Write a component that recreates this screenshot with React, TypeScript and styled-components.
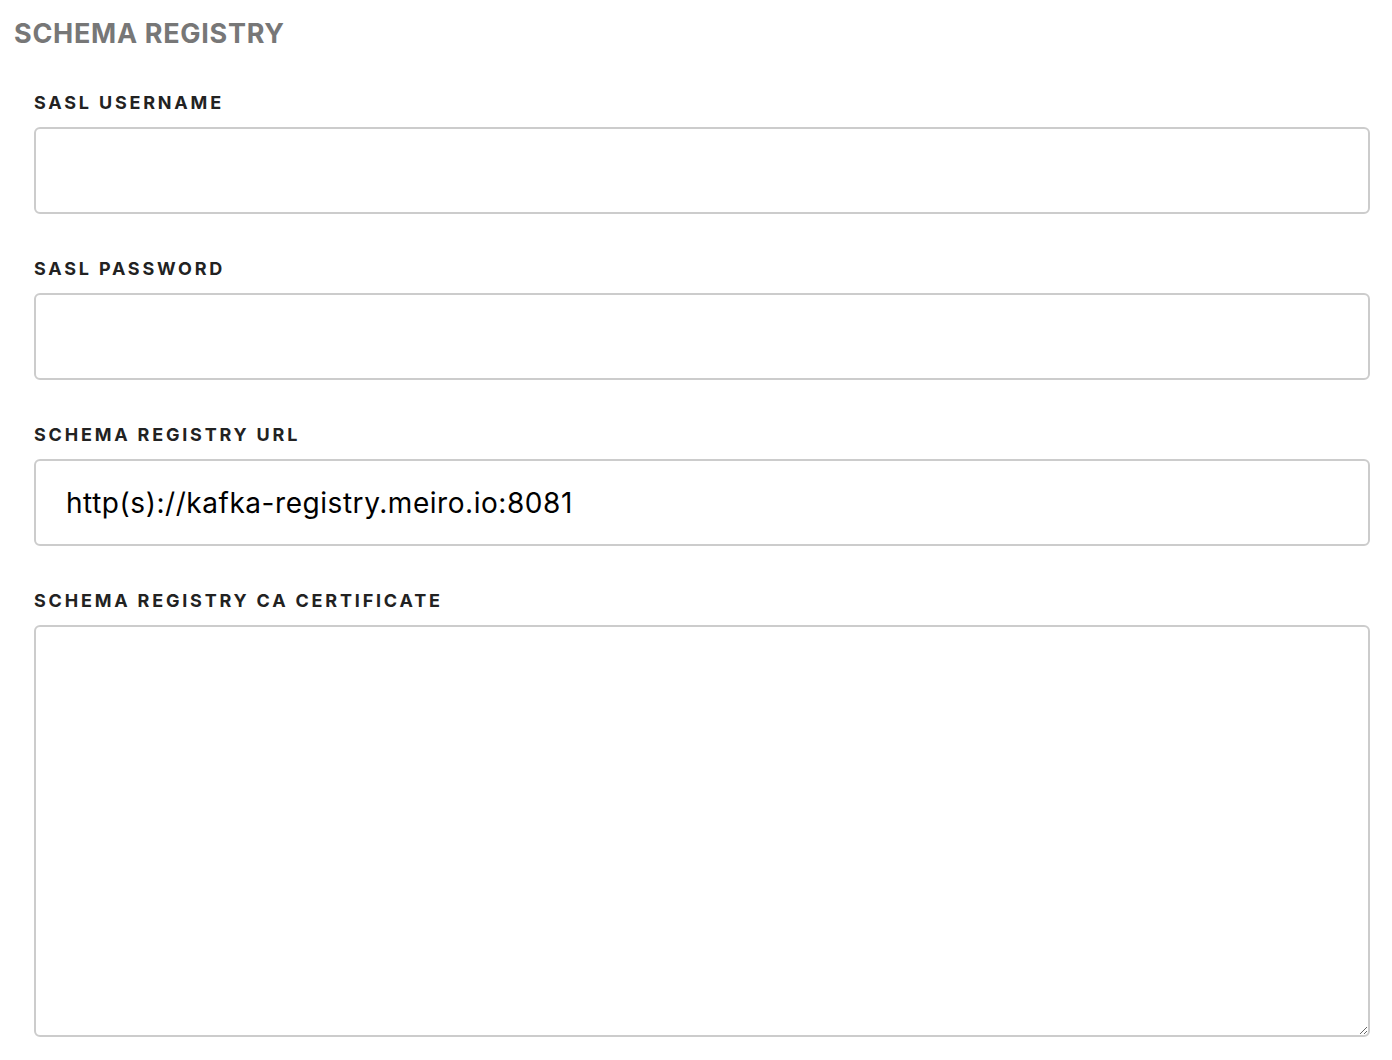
import React from "react";
import styled, { createGlobalStyle } from "styled-components";

const Global = createGlobalStyle`
  html, body { margin: 0; padding: 0; background: #fff; }
  body { font-family: Inter, "Noto Sans", "Liberation Sans", sans-serif; }
  * { box-sizing: border-box; }
`;

const Page = styled.div`
  padding: 18px 22px 0 14px;
`;

const Title = styled.h2`
  margin: 0;
  font-size: 27px;
  line-height: 32px;
  font-weight: 700;
  letter-spacing: 0.7px;
  color: #777777;
  text-transform: uppercase;
`;

const Fields = styled.div`
  display: flex;
  flex-direction: column;
  gap: 45px;
  padding: 43px 0 0 20px;
`;

const Field = styled.label`
  display: flex;
  flex-direction: column;
  gap: 14px;
`;

const LabelText = styled.span`
  font-size: 18px;
  line-height: 20px;
  font-weight: 700;
  letter-spacing: 2.8px;
  color: #222222;
  text-transform: uppercase;
`;

const Input = styled.input`
  width: 100%;
  height: 87px;
  border: 2px solid #cccccc;
  border-radius: 6px;
  padding: 0 30px;
  font-family: inherit;
  font-size: 28px;
  letter-spacing: 0.55px;
  color: #000;
  background: #fff;
  outline: none;
`;

const TextArea = styled.textarea`
  width: 100%;
  height: 412px;
  border: 2px solid #cccccc;
  border-radius: 6px;
  padding: 20px 30px;
  font-family: inherit;
  font-size: 28px;
  background: #fff;
  outline: none;
  resize: vertical;
  display: block;
`;

export default function App() {
  return (
    <>
      <Global />
      <Page>
        <Title>Schema Registry</Title>
        <Fields>
          <Field>
            <LabelText>SASL Username</LabelText>
            <Input type="text" defaultValue="" />
          </Field>
          <Field>
            <LabelText>SASL Password</LabelText>
            <Input type="text" defaultValue="" />
          </Field>
          <Field>
            <LabelText>Schema Registry URL</LabelText>
            <Input type="text" defaultValue="http(s)://kafka-registry.meiro.io:8081" />
          </Field>
          <Field>
            <LabelText>Schema Registry CA Certificate</LabelText>
            <TextArea defaultValue="" />
          </Field>
        </Fields>
      </Page>
    </>
  );
}
